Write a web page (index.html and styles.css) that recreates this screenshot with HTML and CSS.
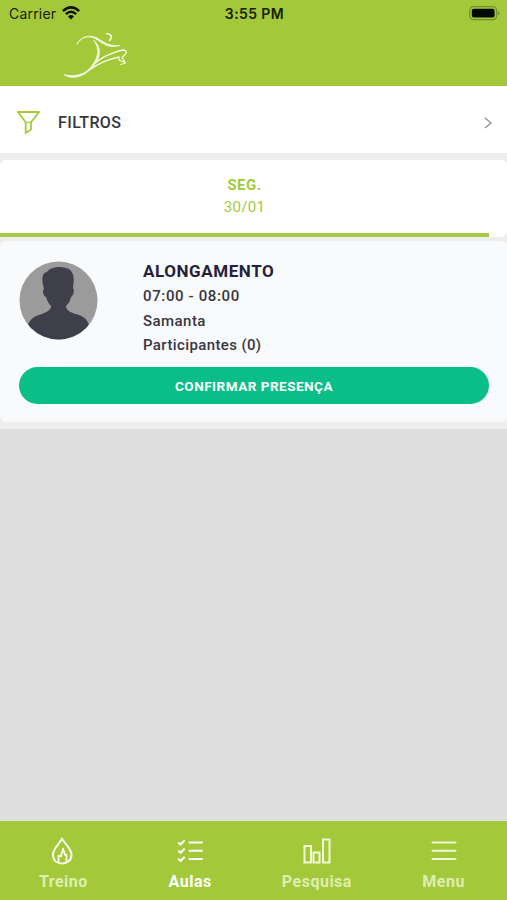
FILE: index.html
```html
<!DOCTYPE html>
<html lang="pt">
<head>
<meta charset="utf-8">
<title>Aulas</title>
<link rel="stylesheet" href="styles.css">
</head>
<body>
<div class="app">
  <header class="header">
    <div class="status">
      <div class="carrier"><span class="carrier-name">Carrier</span>
        <svg width="18" height="14" viewBox="0 0 18 14" fill="none" stroke="#111" stroke-width="2.5"><path d="M.9 5.1Q9-2.3 17.100 5.100M3.900 8.100Q9 3.500 14.100 8.100"/><path d="M6 10.400Q9 7.800 12 10.400L9 13.500Z" fill="#111" stroke="none"/></svg>
      </div>
      <span class="clock">3:55 PM</span>
      <svg class="battery" width="31" height="15" viewBox="0 0 31 15"><rect x=".7" y=".7" width="27" height="13" rx="4" fill="none" stroke="#718e2c" stroke-width="1.200"/><rect x="2.800" y="2.800" width="22.800" height="8.800" rx="2" fill="#050a00"/><path d="M29 5.200Q32 7.200 29 9.200Z" fill="#718e2c"/></svg>
    </div>
    <svg class="logo" width="66" height="48" viewBox="0 0 66 48" fill="none" stroke="#f4fae4" stroke-width="1.300" stroke-linecap="round" stroke-linejoin="round"><path d="M14 12C18 5 25 3 32 6.500C40 11 45 17 57 13.300C48 15 42 11 34 6C25 2 18 5 14 12Z" fill="#f4fae4" stroke-width=".8"/><path d="M31 8.500C40 17 37 27 28 37C20 45 9 48 1 42.700C11 45 21 43 27 36C36 26 37 17 31 8.500Z" fill="#f4fae4" stroke-width=".8"/><path d="M43.500 1.700C48 1.500 50 5 46.500 8.500" stroke-width="1.600"/><path d="M28 36C34 27 48 21 60 18C65 18 64 22 59 25.500L62.500 31L58 32.500M28 37C36 31 47 27 56 25L56 28L61 30" /></svg>
  </header>
  <div class="filters">
    <svg width="23" height="25" viewBox="0 0 23 25" fill="none" stroke="#a6c93a" stroke-width="1.800" stroke-linejoin="round"><path d="M1 2H22L14 12.300V19.500L8.700 23V12.300Z"/><path d="M8.700 12.300H14" stroke-width="1.200"/></svg>
    <span class="filters-label">FILTROS</span>
    <svg class="chevron" width="8" height="12" viewBox="0 0 8 12" fill="none" stroke="#8f8f94" stroke-width="1.400"><path d="M1 1L7 6L1 11"/></svg>
  </div>
  <div class="day">
    <span class="day-name">SEG.</span>
    <span class="day-date">30/01</span>
    <div class="day-line"></div>
  </div>
  <section class="lesson-wrap">
    <div class="lesson">
      <div class="lesson-info">
        <svg class="avatar" width="79" height="79" viewBox="0 0 79 79"><defs><clipPath id="round"><circle cx="39.500" cy="39.500" r="39"/></clipPath></defs><g clip-path="url(#round)"><rect width="79" height="79" fill="#9b9b9c"/><path fill="#3f3f4b" d="M25 28C22 17 23 12 28 11C32 5 44 5 50 8C56 12 55 20 54 27C56 30 54 35 52 36C51 41 49 43 47 45C47 50 53 52 60 54C68 57 71 61 72 79H7C7 64 10 57 20 54C28 51 32 49 32 45C29 42 28 39 27 36C24 34 23 30 25 28Z"/></g></svg>
        <div class="lesson-text">
          <h1>ALONGAMENTO</h1>
          <p class="time">07:00 - 08:00</p>
          <p class="teacher">Samanta</p>
          <p class="people">Participantes (0)</p>
        </div>
      </div>
      <button class="confirm">CONFIRMAR PRESENÇA</button>
    </div>
  </section>
  <main class="blank"></main>
  <nav class="nav">
    <a class="tab treino">
      <svg width="28" height="30" viewBox="0 0 28 30" fill="none" stroke="#f8fdec" stroke-width="2" stroke-linejoin="round"><path d="M13 2.500C11 7.500 4 12 4 19C4 24.500 8 27.500 13 27.500S22.500 24.500 22.500 19C22.500 12 15 7.500 13 2.500Z"/><path d="M9.500 27V19.500L12 20.500L14 12.500L16 19L17.500 18.500V27" stroke-width="1.700"/></svg>
      <span>Treino</span>
    </a>
    <a class="tab aulas">
      <svg width="28" height="30" viewBox="0 0 28 30" fill="none" stroke="#fff" stroke-width="2" stroke-linecap="round" stroke-linejoin="round"><path d="M13.500 6.500H26M13.500 14.700H26M13.500 22.900H26"/><path d="M2.800 7L4.500 8.600L8 5M2.800 15.200L4.500 16.800L8 13.200M2.800 23.400L4.500 25L8 21.400" stroke-width="2.100"/></svg>
      <span>Aulas</span>
    </a>
    <a class="tab pesquisa">
      <svg width="28" height="30" viewBox="0 0 28 30" fill="none" stroke="#f1fad5" stroke-width="2"><path d="M1.500 10H8V26.500H1.500ZM10.500 16.500H16.500V26.500H10.500ZM20 3.500H26.500V26.500H20Z"/></svg>
      <span>Pesquisa</span>
    </a>
    <a class="tab menu">
      <svg width="28" height="30" viewBox="0 0 28 30" fill="none" stroke="#f1fad5" stroke-width="2" stroke-linecap="round"><path d="M2.500 6.500H25.500M2.500 14.700H25.500M2.500 22.900H25.500"/></svg>
      <span>Menu</span>
    </a>
  </nav>
</div>
</body>
</html>
```
FILE: styles.css
```css
* { box-sizing: border-box; }
body { margin: 0; }
h1, p { margin: 0; }
.app {
  width: 507px;
  height: 900px;
  display: flex;
  flex-direction: column;
  background: #eeeeef;
  font-family: Roboto, "Liberation Sans", sans-serif;
  color: #38363e;
  overflow: hidden;
}
.header { height: 86px; flex: none; background: #a3c93a; }
.status {
  height: 28px;
  display: grid;
  grid-template-columns: 1fr auto 1fr;
  align-items: center;
  padding: 0 7px 2px 9px;
  font-family: Inter, sans-serif;
  color: #172000;
}
.carrier { display: flex; align-items: center; gap: 6px; font-size: 14px; }
.carrier-name { letter-spacing: .2px; }
.carrier svg { margin-top: -1px; }
.clock { font-size: 14px; font-weight: 600; letter-spacing: .4px; }
.battery { justify-self: end; }
.logo { display: block; margin: 4px 0 0 63px; }
.filters {
  height: 67px;
  flex: none;
  display: flex;
  align-items: center;
  padding: 5px 15px 0 17px;
  background: #fff;
}
.filters-label { margin-left: 18px; font-size: 16px; font-weight: 500; letter-spacing: .4px; }
.chevron { margin: 2px 0 0 auto; }
.day {
  height: 77px;
  margin-top: 7px;
  flex: none;
  display: flex;
  flex-direction: column;
  align-items: center;
  padding-top: 14px;
  border-radius: 6px;
  background: #fff;
  color: #a3c93a;
}
.day-name, .day-date { height: 22px; line-height: 22px; padding-right: 18px; }
.day-name { font-size: 15px; font-weight: 700; letter-spacing: .5px; }
.day-date { font-size: 15px; letter-spacing: .3px; }
.day-line { width: 489px; height: 4px; margin: 15px 18px 0 0; background: #a8cb43; }
.lesson-wrap { flex: none; height: 192px; padding-top: 4px; background: #eeeeef; border-radius: 0 0 6px 6px; }
.lesson { height: 181px; padding: 20px 18px 0 19px; border-radius: 6px; background: #f9fafc; }
.lesson-info { display: flex; gap: 45px; height: 106px; }
.avatar { flex: none; }
.lesson-text p { height: 24.500px; line-height: 24.500px; font-size: 15px; font-weight: 500; white-space: nowrap; }
.lesson-text .time { letter-spacing: .63px; }
.lesson-text .teacher { letter-spacing: .45px; }
.lesson-text .people { letter-spacing: .38px; }
h1 { height: 23px; line-height: 21px; font-size: 17px; font-weight: 700; letter-spacing: .57px; color: #24213b; }
.confirm {
  display: block;
  width: 100%;
  height: 37px;
  padding: 0;
  border: 0;
  border-radius: 19px;
  background: #0bbd86;
  color: #fff;
  font: 700 13.500px Roboto, sans-serif;
  letter-spacing: .5px;
}
.blank { flex: 1; background: #dfdfdf; }
.nav {
  height: 79px;
  flex: none;
  display: grid;
  grid-template-columns: repeat(4, 1fr);
  background: #a3c93a;
}
.tab {
  display: flex;
  flex-direction: column;
  align-items: center;
  padding-top: 15px;
  color: #dfeeb0;
  font-size: 16px;
  font-weight: 700;
}
.tab span { padding-top: 1px; line-height: 30px; letter-spacing: .5px; }
.aulas { color: #fff; }
```
